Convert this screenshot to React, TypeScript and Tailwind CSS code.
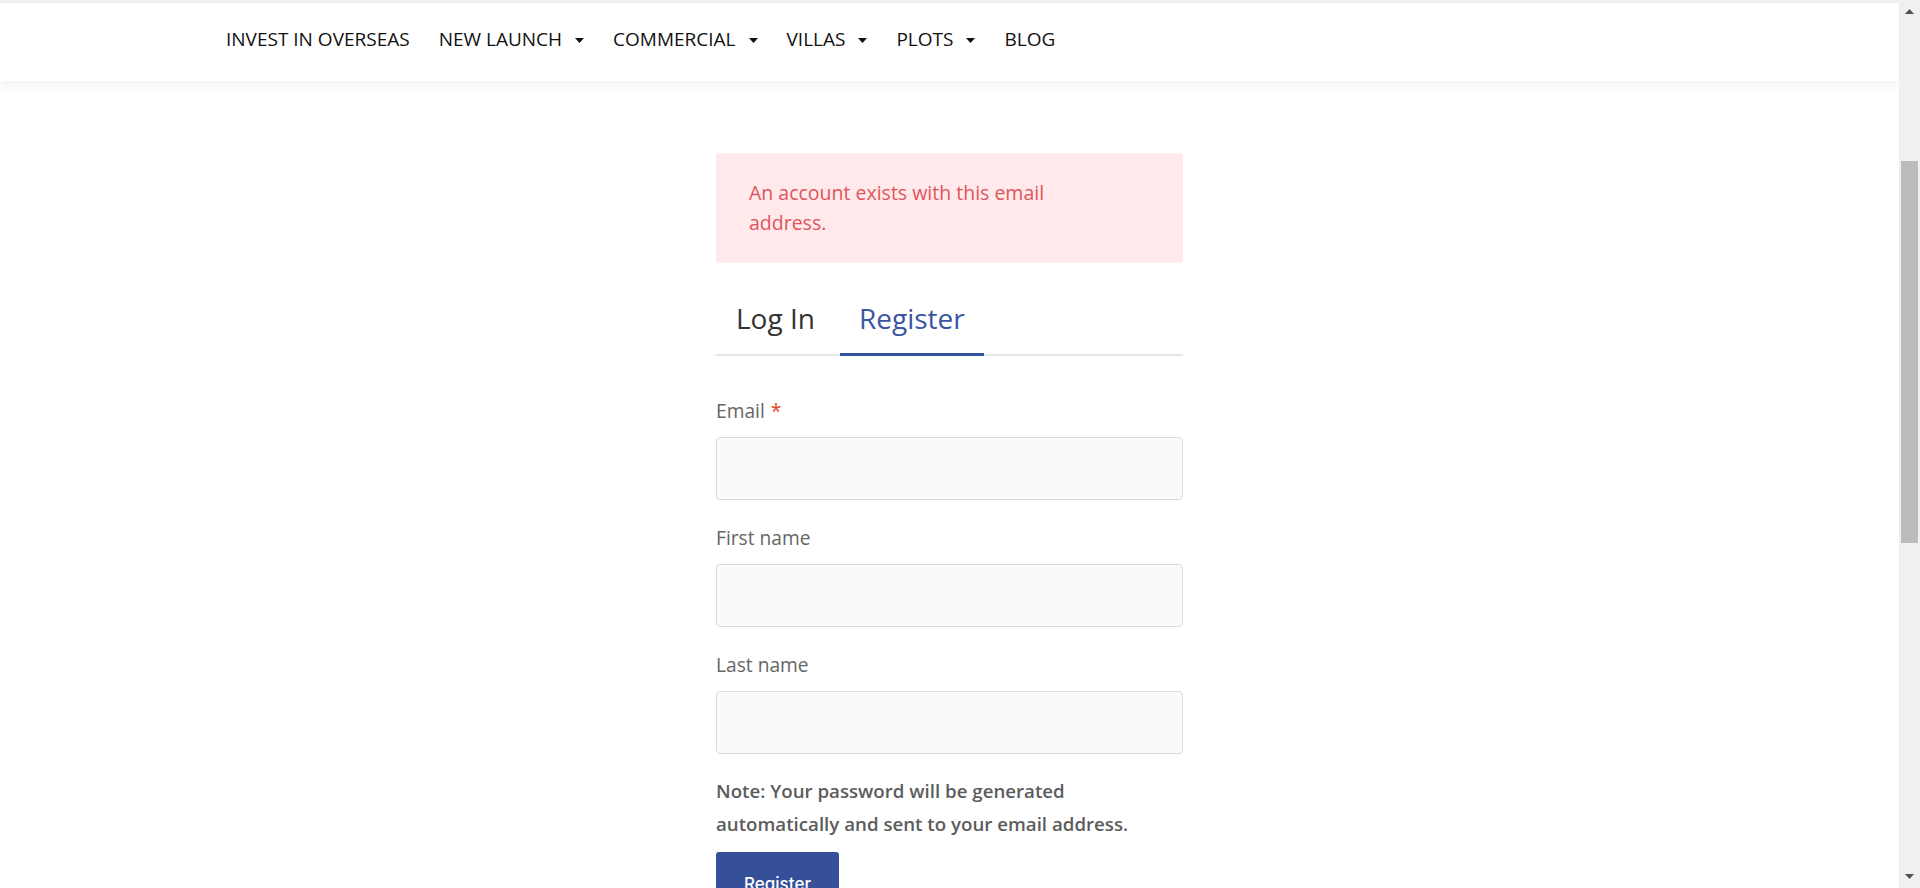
import React from "react";

const Caret = () => (
  <svg width="9" height="5" viewBox="0 0 9 5" className="ml-[13px] mt-[2px]" aria-hidden>
    <path d="M0 0 H9 L4.5 5 Z" fill="#111" />
  </svg>
);

const NavItem = ({ label, caret }: { label: string; caret?: boolean }) => (
  <div className="flex items-center">
    <span>{label}</span>
    {caret && <Caret />}
  </div>
);

const Field = ({ label, required }: { label: string; required?: boolean }) => (
  <div className="mb-[24px]">
    <div className="text-[19.2px] leading-[27px] text-[#666666] mb-[13px]">
      {label}
      {required && <span className="text-[#e2401c] ml-[6px]">*</span>}
    </div>
    <input
      type="text"
      className="block w-full h-[63px] rounded-[4px] border border-[#dcdcdc] bg-[#fafafa] px-4 outline-none"
    />
  </div>
);

export default function App() {
  return (
    <div
      className="flex w-[1920px] h-[888px] overflow-hidden bg-white"
      style={{ fontFamily: '"Open Sans", "Noto Sans", sans-serif' }}
    >
      <div className="flex-1 flex flex-col min-w-0 overflow-hidden">
        <div className="h-[3px] shrink-0 bg-[#f4f4f4]" />
        <header className="h-[78px] shrink-0 bg-white shadow-[0_2px_12px_rgba(0,0,0,0.08)] relative z-10">
          <nav className="flex items-center gap-[29px] pl-[226px] pt-[23px] text-[19px] leading-[26px] text-[#111]">
            <NavItem label="INVEST IN OVERSEAS" />
            <NavItem label="NEW LAUNCH" caret />
            <NavItem label="COMMERCIAL" caret />
            <NavItem label="VILLAS" caret />
            <NavItem label="PLOTS" caret />
            <NavItem label="BLOG" />
          </nav>
        </header>

        <main className="w-[467px] shrink-0 mx-auto mt-[72px]">
          <div className="rounded-[4px] bg-[#ffe9ea] pl-[33px] pr-[60px] py-[25px]">
            <p className="text-[19.5px] leading-[30px] text-[#e0545c] max-w-[310px]">
              An account exists with this email address.
            </p>
          </div>

          <div className="mt-[36px] flex border-b-[2px] border-[#e6e6e6]">
            <div className="px-[20px] pb-[17px] text-[28px] leading-[38px] text-[#333333]">Log In</div>
            <div className="ml-[5px] px-[19px] pb-[16px] -mb-[2px] border-b-[3px] border-[#34519b] text-[28px] leading-[38px] text-[#3a55a1]">
              Register
            </div>
          </div>

          <div className="mt-[41px]">
            <Field label="Email" required />
            <Field label="First name" />
            <Field label="Last name" />
          </div>

          <p className="-mt-[4px] text-[18.7px] leading-[33px] font-semibold text-[#5c5c5c]">
            Note: Your password will be generated automatically and sent to your email address.
          </p>

          <button
            className="mt-[12px] h-[66px] w-[123px] rounded-[3px] bg-[#354f99] text-white text-[17px] font-medium"
            style={{ fontFamily: 'Inter, "Liberation Sans", sans-serif' }}
          >
            Register
          </button>
        </main>
      </div>

      <div className="w-[21px] h-[888px] shrink-0 bg-[#f0f0f0] flex flex-col items-center">
        <svg width="9" height="5" viewBox="0 0 9 5" className="mt-[9px] shrink-0" aria-hidden>
          <path d="M0 5 H9 L4.5 0 Z" fill="#505050" />
        </svg>
        <div className="mt-[147px] w-[17px] h-[382px] shrink-0 bg-[#bcbcbc]" />
        <div className="flex-1" />
        <svg width="9" height="5" viewBox="0 0 9 5" className="mb-[9px] shrink-0" aria-hidden>
          <path d="M0 0 H9 L4.5 5 Z" fill="#505050" />
        </svg>
      </div>
    </div>
  );
}
